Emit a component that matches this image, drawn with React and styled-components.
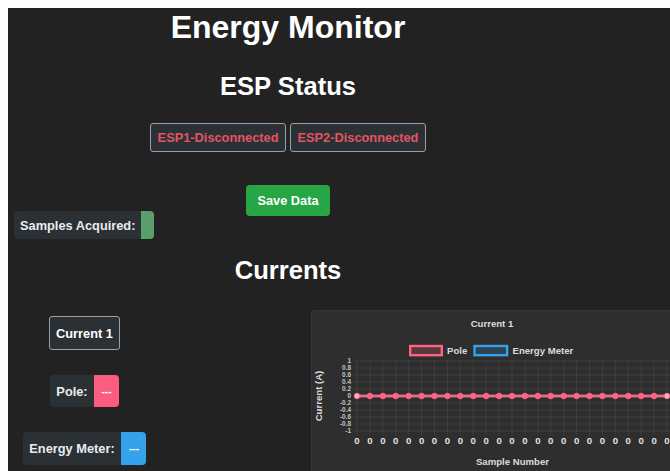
import React from 'react';
import styled, { createGlobalStyle } from 'styled-components';

const GlobalStyle = createGlobalStyle`
  html { overflow: hidden; }
  body {
    margin: 8px 0 0 8px;
    background: #ffffff;
    font-family: "Liberation Sans", Arial, sans-serif;
  }
`;

const Page = styled.div`
  box-sizing: border-box;
  min-height: 480px;
  padding-top: 1px;
  background: #222222;
  color: #dee2e6;
`;

const Main = styled.main`
  width: 560px;
  text-align: center;
`;

const Title = styled.h1`
  margin: 0;
  font-size: 32px;
  line-height: 37px;
  font-weight: 700;
  color: #ffffff;
`;

const Heading = styled.h2`
  margin: ${(p) => p.$top}px 0 0;
  font-size: 25.6px;
  line-height: 29px;
  font-weight: 700;
  color: #ffffff;
`;

const StatusRow = styled.div`
  display: flex;
  justify-content: center;
  gap: 4px;
  margin-top: 21.5px;
`;

const StatusBadge = styled.button`
  box-sizing: border-box;
  height: 29px;
  padding: 0 6.5px;
  border: 1px solid #9ba1a7;
  border-radius: 3px;
  background: #2b3035;
  color: #e35462;
  font: 700 12.8px/15px "Liberation Sans", Arial, sans-serif;
`;

const ActionRow = styled.div`
  display: flex;
  justify-content: center;
  margin-top: 33px;
`;

const SaveButton = styled.button`
  height: 31px;
  padding: 0 11px;
  border: none;
  border-radius: 4px;
  background: #26a644;
  color: #ffffff;
  font: 700 12.8px/15px "Liberation Sans", Arial, sans-serif;
`;

const SamplesRow = styled.div`
  display: flex;
  margin-top: -4.3px;
  padding-left: 6px;
`;

const InputGroup = styled.div`
  display: inline-flex;
  align-items: stretch;
  height: ${(p) => p.$height}px;
  font: 700 12.8px/15px "Liberation Sans", Arial, sans-serif;
`;

const GroupLabel = styled.span`
  display: flex;
  align-items: center;
  padding: 0 ${(p) => p.$pad}px;
  border-radius: 4px 0 0 4px;
  background: #2b3035;
  color: #e9ecef;
  white-space: nowrap;
`;

const GroupValue = styled.span`
  display: flex;
  align-items: center;
  justify-content: center;
  min-width: ${(p) => p.$width}px;
  border-radius: 0 4px 4px 0;
  background: ${(p) => p.$color};
  color: #ffffff;
  font-size: 10px;
`;

const CurrentsRow = styled.section`
  display: flex;
  align-items: flex-start;
  margin-top: 25.4px;
`;

const SensorColumn = styled.div`
  flex: 0 0 153px;
  display: flex;
  flex-direction: column;
  align-items: center;
  gap: 25px;
  padding-top: 6px;
`;

const ChannelTag = styled.div`
  box-sizing: border-box;
  height: 34px;
  display: flex;
  align-items: center;
  padding: 0 6px;
  border: 1px solid #9ba1a7;
  border-radius: 3px;
  background: #2b3035;
  color: #ffffff;
  font: 700 12.8px/15px "Liberation Sans", Arial, sans-serif;
`;

const ChartPanel = styled.div`
  box-sizing: border-box;
  flex: 0 0 359px;
  height: 180px;
  margin-left: 150px;
  border: 1px solid #363636;
  border-right: none;
  border-radius: 4px 0 0 4px;
  background: #2e2e2e;
  overflow: hidden;
`;

const PINK = '#ff6384';
const BLUE = '#36a2eb';
const POINTS = 25;
const X0 = 45;
const STEP = 12.917;
const TOP = 50;
const ROW = 7;
const ZERO_Y = TOP + ROW * 5;
const yTicks = ['1', '0.8', '0.6', '0.4', '0.2', '0', '-0.2', '-0.4', '-0.6', '-0.8', '-1'];
const xs = Array.from({ length: POINTS }, (_, i) => X0 + i * STEP);

function CurrentChart() {
  const line = xs.map((x) => `${x},${ZERO_Y}`).join(' ');
  return (
    <svg width="360" height="180" viewBox="0 0 360 180">
      <g fontFamily='"Liberation Sans", Arial, sans-serif'>
        <text x="180" y="16" fontSize="9.6" fontWeight="700" fill="#dcdcdc" textAnchor="middle">
          Current 1
        </text>

        <rect x="98.2" y="35" width="31.6" height="9.2" fill="rgba(255,99,132,0.2)" stroke={PINK} strokeWidth="2.4" />
        <text x="135" y="43.3" fontSize="9.6" fontWeight="700" fill="#dcdcdc">Pole</text>
        <rect x="162.5" y="35" width="32.6" height="9.2" fill="rgba(54,162,235,0.2)" stroke={BLUE} strokeWidth="2.4" />
        <text x="200.5" y="43.3" fontSize="9.6" fontWeight="700" fill="#dcdcdc">Energy Meter</text>

        <text transform={`translate(10,${ZERO_Y}) rotate(-90)`} fontSize="9.6" fontWeight="700" fill="#dcdcdc" textAnchor="middle">
          Current (A)
        </text>

        <g stroke="rgba(255,255,255,0.07)" strokeWidth="1">
          {yTicks.map((_, i) => (
            <line key={`h${i}`} x1="41" x2="360" y1={TOP + i * ROW} y2={TOP + i * ROW} />
          ))}
          {xs.map((x, i) => (
            <line key={`v${i}`} x1={x} x2={x} y1={TOP} y2={TOP + ROW * 10 + 4} />
          ))}
        </g>

        <g fontSize="6.4" fontWeight="700" fill="#c4c4c4" textAnchor="end">
          {yTicks.map((t, i) => (
            <text key={t} x="39" y={TOP + i * ROW + 2.3}>{t}</text>
          ))}
        </g>

        <polyline points={line} fill="none" stroke={BLUE} strokeWidth="2.4" />
        <polyline points={line} fill="none" stroke={PINK} strokeWidth="2.4" />
        {xs.map((x, i) => (
          <circle
            key={`p${i}`}
            cx={x}
            cy={ZERO_Y}
            r="2.8"
            fill={i === 0 || i === POINTS - 1 ? '#f3b6c4' : PINK}
            stroke={PINK}
            strokeWidth="1"
          />
        ))}

        <g fontSize="9.6" fontWeight="700" fill="#e2e2e2" textAnchor="middle">
          {xs.map((x, i) => (
            <text key={`x${i}`} x={x} y="133">0</text>
          ))}
        </g>

        <text x="200.5" y="154" fontSize="9.6" fontWeight="700" fill="#dcdcdc" textAnchor="middle">
          Sample Number
        </text>
      </g>
    </svg>
  );
}

export default function App() {
  return (
    <>
      <GlobalStyle />
      <Page>
        <Main>
          <Title>Energy Monitor</Title>
          <Heading $top={26}>ESP Status</Heading>
          <StatusRow>
            <StatusBadge>ESP1-Disconnected</StatusBadge>
            <StatusBadge>ESP2-Disconnected</StatusBadge>
          </StatusRow>
          <ActionRow>
            <SaveButton>Save Data</SaveButton>
          </ActionRow>
          <SamplesRow>
            <InputGroup $height={28}>
              <GroupLabel $pad={6}>Samples Acquired:</GroupLabel>
              <GroupValue $width={13} $color="#5a9f6b" />
            </InputGroup>
          </SamplesRow>
          <Heading $top={16.6}>Currents</Heading>
          <CurrentsRow>
            <SensorColumn>
              <ChannelTag>Current 1</ChannelTag>
              <InputGroup $height={32}>
                <GroupLabel $pad={6.4}>Pole:</GroupLabel>
                <GroupValue $width={25} $color="#fb5d80">---</GroupValue>
              </InputGroup>
              <InputGroup $height={33}>
                <GroupLabel $pad={6.8}>Energy Meter:</GroupLabel>
                <GroupValue $width={25} $color={BLUE}>---</GroupValue>
              </InputGroup>
            </SensorColumn>
            <ChartPanel>
              <CurrentChart />
            </ChartPanel>
          </CurrentsRow>
        </Main>
      </Page>
    </>
  );
}
